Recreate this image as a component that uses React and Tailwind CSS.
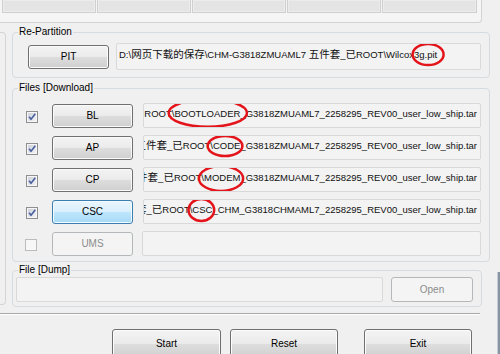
import React from "react";

const FONT = "font-['Liberation_Sans','Noto_Sans_CJK_SC',sans-serif]";

function CJK({ children }) {
  return <span className="text-[10.5px]">{children}</span>;
}

function Circ({ children, box }) {
  return (
    <span className="relative inline-block">
      {children}
      <span className={`absolute pointer-events-none ${box}`}>
        <svg className="block w-full h-full overflow-visible" preserveAspectRatio="none" viewBox="0 0 100 100">
          <ellipse cx="50" cy="50" rx="48" ry="46" fill="none" stroke="#e4141b" strokeWidth="2.5" vectorEffect="non-scaling-stroke" />
        </svg>
      </span>
    </span>
  );
}

function WinButton({ children, variant = "normal", className = "" }) {
  const styles = {
    normal:
      "border-[#707070] text-black bg-[linear-gradient(to_bottom,#f3f3f3_0%,#ebebeb_48%,#dddddd_52%,#cfcfcf_100%)] shadow-[inset_0_0_0_1px_#fbfbfb]",
    focus:
      "border-[#3c7fb1] text-black bg-[linear-gradient(to_bottom,#eaf6fd_0%,#d9f0fc_48%,#bee6fd_52%,#a7d9f5_100%)] shadow-[inset_0_0_0_1px_#f4fbfe]",
    disabled: "border-[#b5b8ba] text-[#8c8c8c] bg-[#f4f4f4]",
  };
  return (
    <div className={`flex items-center justify-center border rounded-[3px] text-[10px] leading-none shrink-0 ${styles[variant]} ${className}`}>
      {children}
    </div>
  );
}

function CheckBox({ checked = true, disabled = false }) {
  if (disabled) {
    return (
      <svg width="12" height="12" className="block shrink-0">
        <rect x="0.5" y="0.5" width="11" height="11" fill="#f7f7f7" stroke="#bcbcbc" />
      </svg>
    );
  }
  return (
    <svg width="12" height="12" className="block shrink-0">
      <defs>
        <linearGradient id="cbg" x1="0" y1="0" x2="1" y2="1">
          <stop offset="0" stopColor="#cfd3dc" />
          <stop offset="1" stopColor="#f2f3f5" />
        </linearGradient>
      </defs>
      <rect x="0.5" y="0.5" width="11" height="11" fill="#f6f6f6" stroke="#8e8f8f" />
      <rect x="2" y="2" width="8" height="8" fill="url(#cbg)" />
      {checked && (
        <path d="M3 5.8 L5 8.3 L9.3 2.8" fill="none" stroke="#4a5f9c" strokeWidth="1.6" strokeLinejoin="round" />
      )}
    </svg>
  );
}

function Group({ label, className = "", children }) {
  return (
    <div className={`relative border border-[#d6dbdf] rounded-[4px] shrink-0 ${className}`}>
      <div className="absolute left-[5px] -top-[7px] px-[1px] bg-[#f0f0f0] text-[10px] leading-[12px] text-black">
        {label}
      </div>
      {children}
    </div>
  );
}

const TextBox = ({ className = "", children }) => (
  <div className={`border border-[#d9d9d9] rounded-[2px] bg-[#f3f3f3] shrink-0 overflow-hidden whitespace-nowrap text-[9.5px] leading-[12px] text-[#111] ${className}`}>
    {children}
  </div>
);

function Prefix() {
  return (
    <>
      D:\<CJK>网页下载的保存</CJK>\CHM-G3818ZMUAML7 <CJK>五件套</CJK>_<CJK>已</CJK>ROOT
    </>
  );
}

const rows = [
  { name: "BL", key: "\\BOOTLOADER", rest: "_G3818ZMUAML7_2258295_REV00_user_low_ship.tar", box: "-left-[5px] -right-[8px] -top-[10px] -bottom-[8px]" },
  { name: "AP", key: "\\CODE", rest: "_G3818ZMUAML7_2258295_REV00_user_low_ship.tar", box: "-left-[3px] -right-[3px] -top-[5px] -bottom-[5px]" },
  { name: "CP", key: "\\MODEM", rest: "_G3818ZMUAML7_2258295_REV00_user_low_ship.tar", box: "-left-[3px] -right-[4px] -top-[7px] -bottom-[8px]" },
  { name: "CSC", key: "\\CSC", rest: "_CHM_G3818CHMAML7_2258295_REV00_user_low_ship.tar", box: "-left-[2px] -right-[2px] -top-[6px] -bottom-[6px]", focus: true },
];

export default function App() {
  return (
    <div className={`w-[500px] h-[354px] bg-[#f0f0f0] overflow-hidden flex ${FONT}`}>
      <div className="w-[497px] flex flex-col shrink-0">
        {/* top strip */}
        <div className="h-[23px] w-[482px] border-b border-r border-[#d3d3d3] rounded-br-[4px] bg-[#f5f5f5] shrink-0">
          <div className="flex gap-[1px] pl-[2px]">
            {[94, 94, 94, 94, 95].map((w, i) => (
              <div key={i} style={{ width: w }} className="h-[13px] bg-[#e4e4e4] border border-t-0 border-[#cfcfcf] shadow-[inset_0_0_0_1px_#ececec]" />
            ))}
          </div>
        </div>

        {/* middle */}
        <div className="flex shrink-0">
          <div className="mt-[9px] h-[273px] w-[6px] border border-l-0 border-[#d5d5d5] rounded-r-[4px] shrink-0" />
          <div className="ml-[6px] w-[478px] flex flex-col">
            <Group label="Re-Partition" className="mt-[9px] h-[46px]">
              <div className="flex items-center pt-[10px] pl-[15px]">
                <WinButton className="w-[81px] h-[24px]">PIT</WinButton>
                <TextBox className="ml-[7px] w-[365px] h-[27px] pt-[4px] pl-[2px]">
                  <Prefix />\Wilcox
                  <Circ box="-left-[2px] -right-[7px] -top-[6px] -bottom-[5px]">3g.pit</Circ>
                </TextBox>
              </div>
            </Group>

            <Group label="Files [Download]" className="mt-[10px] h-[174px]">
              <div className="flex flex-col gap-[7px] pt-[14px] pl-[13px]">
                {rows.map((r) => (
                  <div key={r.name} className="flex items-center h-[25px]">
                    <div className="mt-[2px]">
                      <CheckBox />
                    </div>
                    <WinButton variant={r.focus ? "focus" : "normal"} className="ml-[14px] w-[81px] h-[24px]">
                      {r.name}
                    </WinButton>
                    <TextBox className="ml-[10px] w-[338px] h-[25px] pt-[3px] pr-[3px] flex justify-end">
                      <span className="shrink-0">
                        <Prefix />
                        <Circ box={r.box}>{r.key}</Circ>
                        {r.rest}
                      </span>
                    </TextBox>
                  </div>
                ))}
                <div className="flex items-center h-[25px]">
                  <div className="mt-[2px] -ml-[1px] mr-[1px]">
                    <CheckBox disabled />
                  </div>
                  <WinButton variant="disabled" className="ml-[14px] w-[81px] h-[24px]">
                    UMS
                  </WinButton>
                  <TextBox className="ml-[9px] w-[339px] h-[25px]" />
                </div>
              </div>
            </Group>

            <Group label="File [Dump]" className="mt-[8px] h-[37px] w-[470px]">
              <div className="flex items-center pt-[6px] pl-[3px]">
                <TextBox className="w-[367px] h-[25px]" />
                <WinButton variant="disabled" className="ml-[8px] w-[82px] h-[25px]">
                  Open
                </WinButton>
              </div>
            </Group>
          </div>
        </div>

        {/* separator */}
        <div className="mt-[6px] w-[480px] h-[2px] border-t border-[#a9a9a9] border-b border-b-white shrink-0" />

        {/* bottom buttons */}
        <div className="flex mt-[14px] pl-[112px]">
          <WinButton className="w-[109px] h-[30px]">Start</WinButton>
          <WinButton className="ml-[9px] w-[108px] h-[30px]">Reset</WinButton>
          <WinButton className="ml-[26px] w-[108px] h-[30px]">Exit</WinButton>
        </div>
      </div>

      {/* right window edge */}
      <div className="w-[3px] flex flex-col shrink-0">
        <div className="h-[272px] shrink-0" />
        <div className="flex-1 bg-[#8794a3] border-l border-[#c5ccd4]" />
      </div>
    </div>
  );
}
